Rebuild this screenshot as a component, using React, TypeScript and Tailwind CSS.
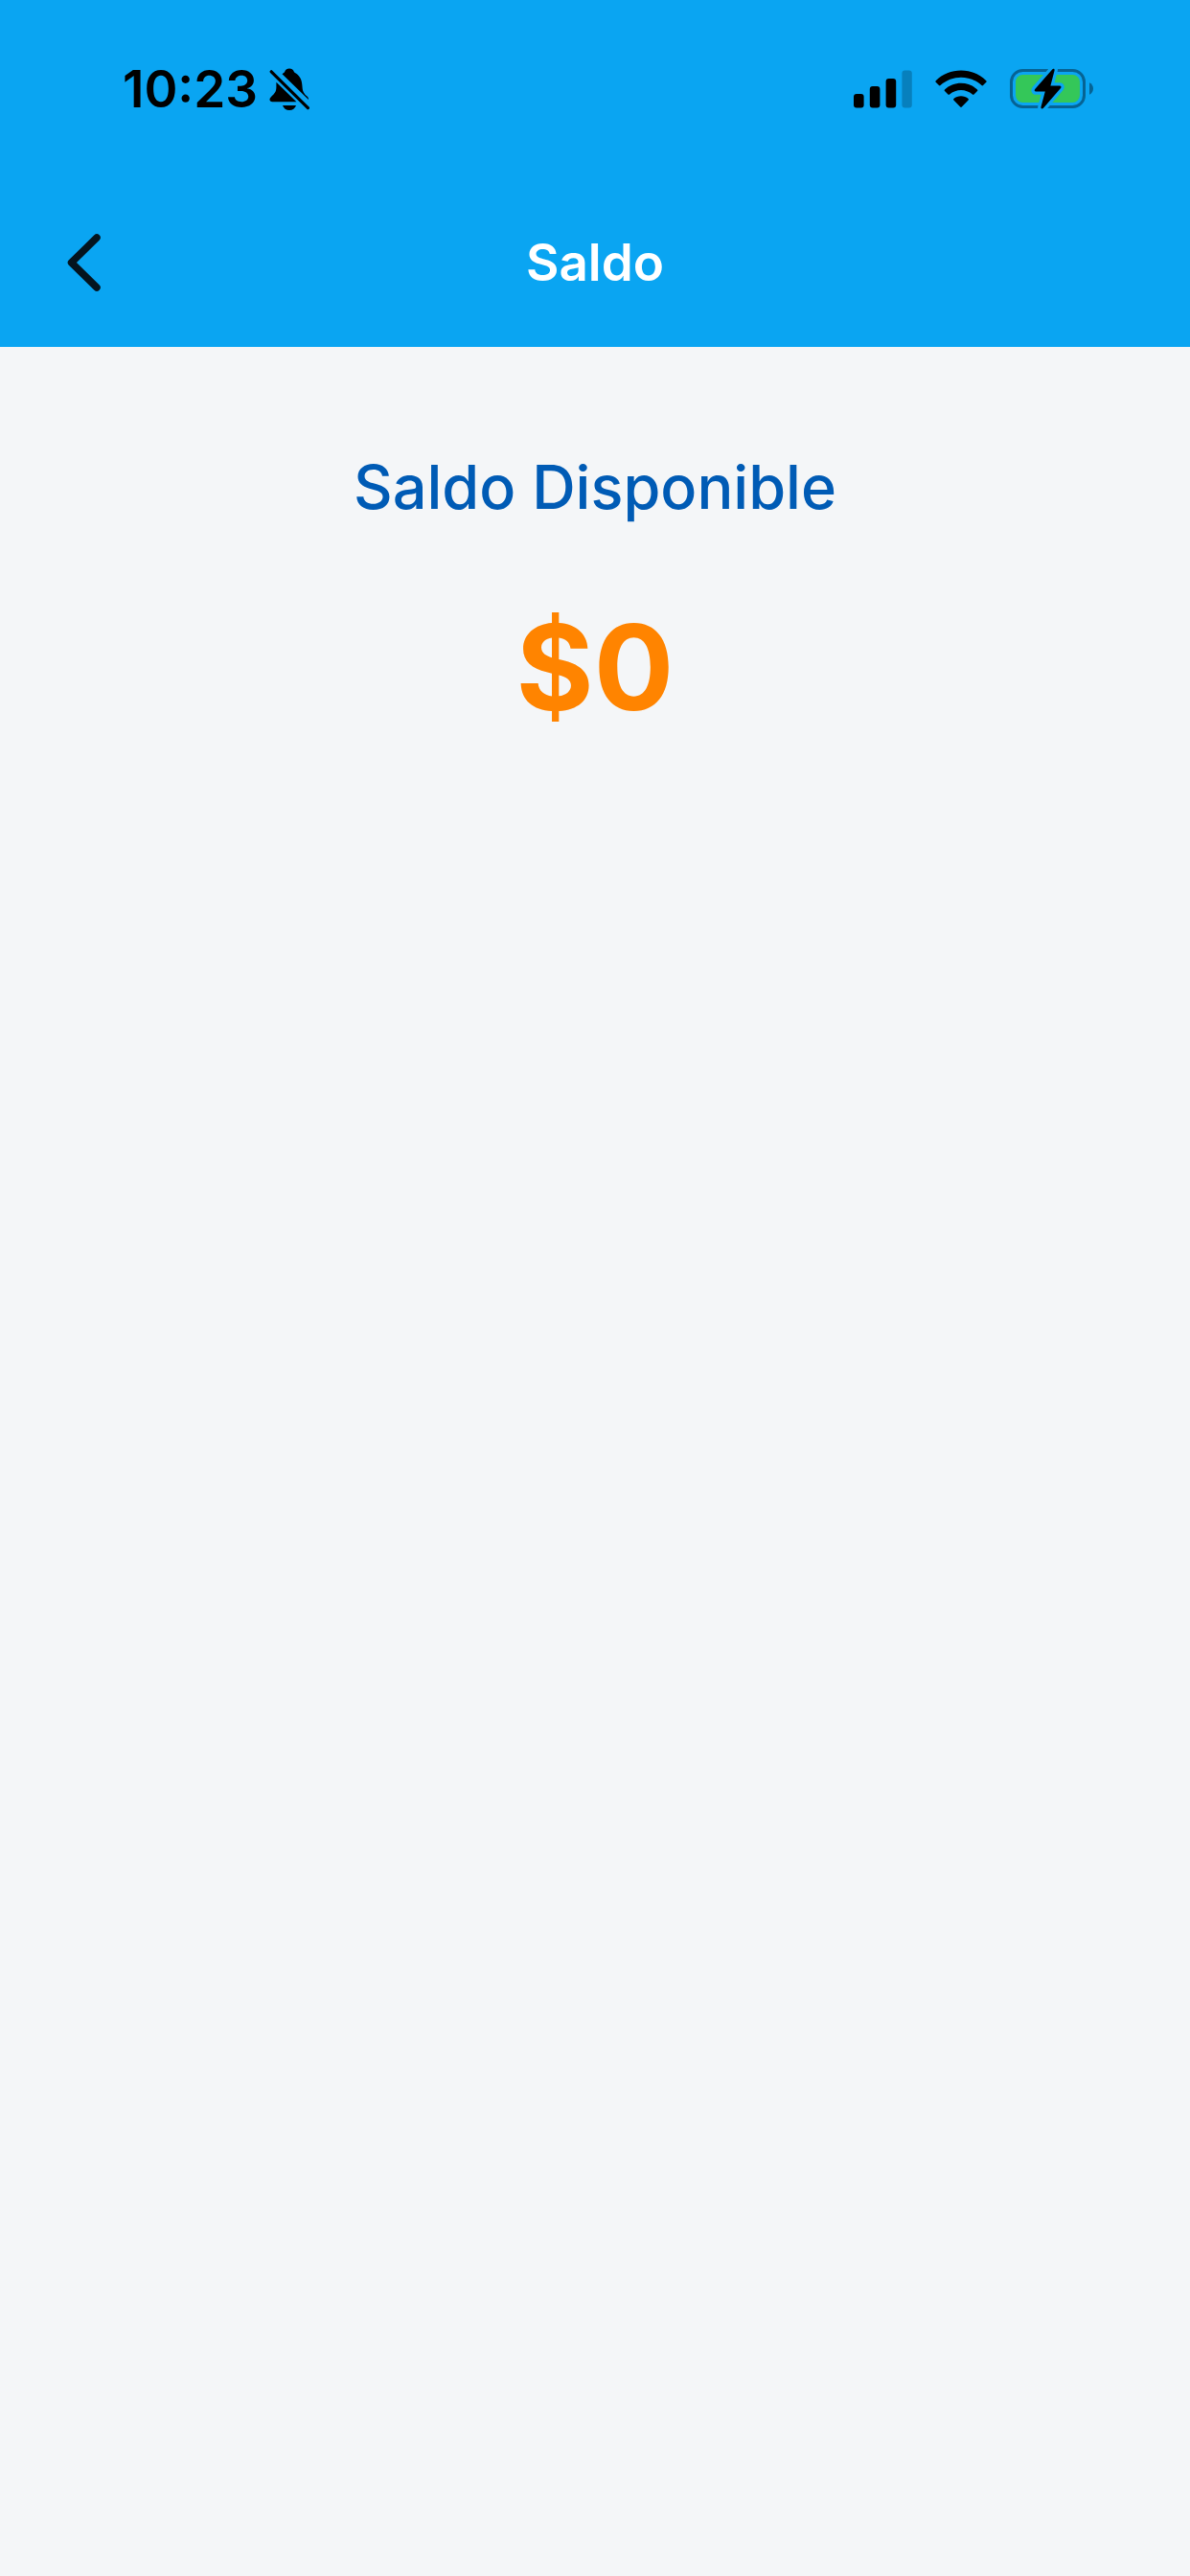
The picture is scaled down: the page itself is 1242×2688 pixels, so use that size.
import React from 'react';

const BellOffIcon: React.FC = () => (
  <svg className="h-11 w-[42px]" viewBox="0 0 42 44" aria-hidden="true">
    <path
      d="M13.5 6.2C14.8 5 15.8 4.9 16.2 3.8C17 1.8 18.8 0.6 21 0.6C23.2 0.6 25 1.8 25.8 3.8C26.2 4.9 27 5 28.2 5.8C32.8 9 34.2 13.5 34.5 19.5C34.8 24.5 36 26.5 39.5 29.5C40.6 30.5 41 31.5 41 33Z"
      fill="#000"
    />
    <path
      d="M7.4 14.8L28.4 35.2H3.2C0.2 35.2 -0.4 32.2 1.8 30.2C5.8 26.4 7.2 25 7.4 20Z"
      fill="#000"
    />
    <path d="M14 39H28C27 42 24.4 44 21 44C17.6 44 15 42 14 39Z" fill="#000" />
    <path d="M2.2 3.8L40.4 41.6" stroke="#000" strokeWidth="3.2" strokeLinecap="round" />
  </svg>
);

const SignalIcon: React.FC = () => (
  <svg className="h-10 w-[61px]" viewBox="0 0 61 40" aria-hidden="true">
    <rect x="0" y="25" width="10.6" height="14.4" rx="3" />
    <rect x="16.8" y="17" width="10.6" height="22.4" rx="3" />
    <rect x="33.6" y="9" width="10.6" height="30.4" rx="3" />
    <rect x="50.4" y="0.6" width="10.4" height="38.8" rx="3" opacity="0.22" />
  </svg>
);

const WifiIcon: React.FC = () => (
  <svg className="h-10 w-[54px]" viewBox="0 0 54 40" aria-hidden="true">
    <path d="M0.7 11.2C14.5 -3 39.5 -3 53.3 11.2C53.8 11.7 53.8 12.2 53.3 12.7L50 16C49.5 16.5 49 16.5 48.5 16C36 5 18 5 5.5 16C5 16.5 4.5 16.5 4 16L0.7 12.7C0.2 12.2 0.2 11.7 0.7 11.2Z" />
    <path d="M10 20.6C19 11.6 35 11.6 44 20.6C44.5 21.1 44.5 21.6 44 22.1L40.5 25.5C40 26 39.5 26 39 25.5C32 19.4 22 19.4 15 25.5C14.5 26 14 26 13.5 25.5L10 22.1C9.5 21.6 9.5 21.1 10 20.6Z" />
    <path d="M19.4 30C23.5 26.4 30.5 26.4 34.6 30C35.1 30.5 35.1 31 34.6 31.5L27.8 38.5C27.3 39 26.7 39 26.2 38.5L19.4 31.5C18.9 31 18.9 30.5 19.4 30Z" />
  </svg>
);

const BatteryIcon: React.FC = () => (
  <svg className="h-11 w-[88px]" viewBox="0 0 88 44" aria-hidden="true">
    <rect x="1.5" y="2.5" width="76" height="38" rx="12" fill="none" stroke="#066394" strokeWidth="3" />
    <path d="M83 15.2C85.4 16.2 87 18.6 87 21.5C87 24.4 85.4 26.8 83 27.8Z" fill="#066394" />
    <rect x="6" y="7" width="67" height="29" rx="7.5" fill="#34c759" />
    <path
      d="M44.2 1.4C45.2 0 47 0.6 46.6 2.4L42.4 18.4H52C53.4 18.4 54 19.8 53 21L35 41.8C33.8 43.2 32 42.4 32.5 40.6L36.8 24.6H27.2C25.8 24.6 25.2 23.2 26.2 22Z"
      fill="#000"
      stroke="#0aa5f2"
      strokeWidth="6.5"
      strokeLinejoin="round"
      paintOrder="stroke"
    />
  </svg>
);

const StatusBar: React.FC = () => (
  <div className="flex h-[186px] items-center justify-between pr-[100px] pl-32 text-black">
    <div className="flex items-center gap-3">
      <span className="text-[53px] leading-none font-semibold">10:23</span>
      <BellOffIcon />
    </div>
    <div className="flex items-center gap-6">
      <SignalIcon />
      <WifiIcon />
      <BatteryIcon />
    </div>
  </div>
);

const BalancePage: React.FC = () => {
  return (
    <div className="min-h-screen bg-[#f4f6f8] font-['Inter','Liberation_Sans',sans-serif]">
      <header className="bg-[#0aa5f2]">
        <StatusBar />
        <nav className="grid h-44 grid-cols-[1fr_auto_1fr] items-center px-16">
          <button type="button" aria-label="Volver" className="justify-self-start py-5 pr-8 pl-1">
            <svg className="h-[62px] w-10" viewBox="0 0 40 62" aria-hidden="true">
              <path
                d="M33 5L6.5 31L33 57"
                fill="none"
                stroke="#04141f"
                strokeWidth="7.5"
                strokeLinecap="round"
                strokeLinejoin="round"
              />
            </svg>
          </button>
          <h1 className="text-[53px] leading-[56px] font-semibold text-white">Saldo</h1>
        </nav>
      </header>

      <main className="flex flex-col items-center pt-[108px] text-center">
        <h2 className="text-[63px] leading-[76px] font-medium text-[#005bb5]">Saldo Disponible</h2>
        <p className="mt-[76px] text-[124px] leading-[148px] font-bold text-[#ff8400]">$0</p>
      </main>
    </div>
  );
};

export default BalancePage;
